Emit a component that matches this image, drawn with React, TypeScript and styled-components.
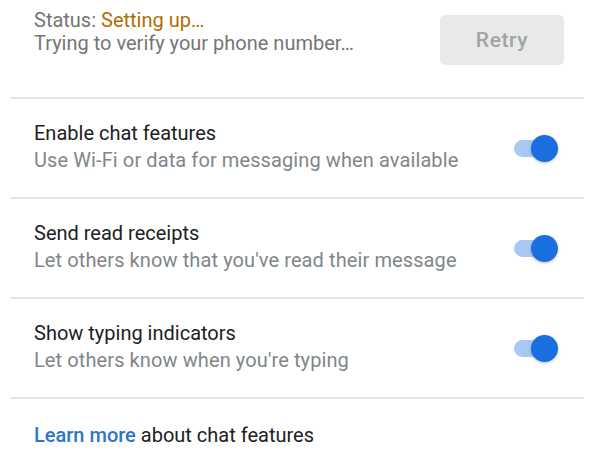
import * as React from 'react'
import styled, { createGlobalStyle } from 'styled-components'

const GlobalStyle = createGlobalStyle`
    body {
        margin: 0;
        background: #ffffff;
        font-family: Roboto, 'Noto Sans', sans-serif;
    }
`

const Page = styled.div`
    width: 601px;
    height: 452px;
    background: #ffffff;
    overflow: hidden;
`

const StatusBlock = styled.div`
    height: 97px;
    display: flex;
    align-items: flex-start;
    justify-content: space-between;
    padding: 9px 37px 0 34px;
    box-sizing: border-box;
`

const StatusText = styled.div`
    font-size: 20px;
    line-height: 23px;
    color: #757575;
`

const Accent = styled.span`
    color: #b06d05;
`

const RetryButton = styled.button`
    width: 124px;
    height: 50px;
    border: none;
    border-radius: 5px;
    background: #e8e9e9;
    color: #a3a3a3;
    font-family: Roboto, sans-serif;
    font-size: 21px;
    font-weight: 500;
    letter-spacing: 0.6px;
    margin-top: 6px;
`

const Divider = styled.div`
    height: 2px;
    margin: 0 17px 0 11px;
    background: #e4e4e4;
`

const Row = styled.div`
    height: 98px;
    display: flex;
    align-items: center;
    justify-content: space-between;
    padding: 0 51px 0 34px;
    box-sizing: border-box;
`

const RowText = styled.div`
    display: flex;
    flex-direction: column;
    margin-top: -2px;
`

const Title = styled.div`
    font-size: 20px;
    line-height: 27px;
    color: #202124;
`

const Subtitle = styled.div`
    font-size: 20px;
    line-height: 27px;
    letter-spacing: 0.1px;
    color: #80868b;
`

const Track = styled.div`
    position: relative;
    width: 36px;
    height: 17px;
    border-radius: 9px;
    background: #a9c8f5;
`

const Knob = styled.div`
    position: absolute;
    right: -8px;
    top: -5px;
    width: 27px;
    height: 27px;
    border-radius: 50%;
    background: #1a6fe0;
    box-shadow: 0 1px 3px rgba(0, 0, 0, 0.25);
`

const Footer = styled.div`
    padding: 23px 34px 0;
    font-size: 20px;
    line-height: 27px;
    color: #202124;
`

const Link = styled.a`
    color: #2d75c9;
    font-weight: 500;
    text-decoration: none;
`

const Toggle = () => (
    <Track>
        <Knob />
    </Track>
)

const settings = [
    {
        title: 'Enable chat features',
        subtitle: 'Use Wi-Fi or data for messaging when available',
    },
    {
        title: 'Send read receipts',
        subtitle: "Let others know that you've read their message",
    },
    {
        title: 'Show typing indicators',
        subtitle: "Let others know when you're typing",
    },
]

const App = () => (
    <Page>
        <GlobalStyle />
        <StatusBlock>
            <StatusText>
                Status: <Accent>Setting up…</Accent>
                <br />
                Trying to verify your phone number…
            </StatusText>
            <RetryButton>Retry</RetryButton>
        </StatusBlock>
        {settings.map((s) => (
            <React.Fragment key={s.title}>
                <Divider />
                <Row>
                    <RowText>
                        <Title>{s.title}</Title>
                        <Subtitle>{s.subtitle}</Subtitle>
                    </RowText>
                    <Toggle />
                </Row>
            </React.Fragment>
        ))}
        <Divider />
        <Footer>
            <Link href="#">Learn more</Link> about chat features
        </Footer>
    </Page>
)

export default App
